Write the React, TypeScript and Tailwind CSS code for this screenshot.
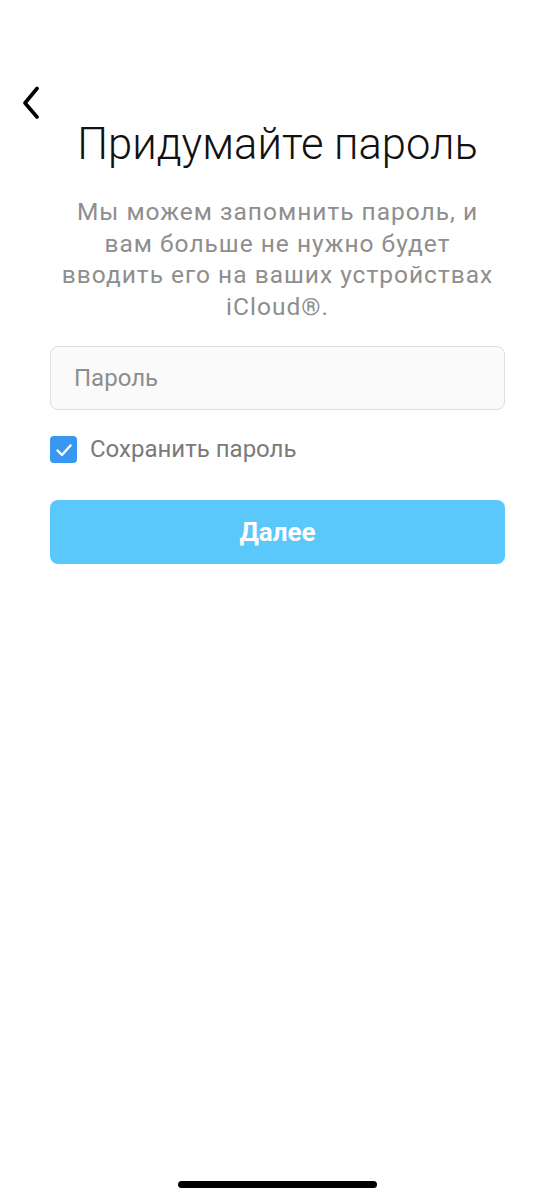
import { useState } from "react";

export default function App() {
  const [save, setSave] = useState(true);
  const [password, setPassword] = useState("");

  return (
    <div
      className="relative flex min-h-[1200px] w-full flex-col bg-white"
      style={{ fontFamily: "Roboto, 'Liberation Sans', sans-serif" }}
    >
      {/* Back */}
      <div className="pl-[20px] pt-[85px]">
        <button type="button" className="block h-[34px] text-black">
          <svg width="22" height="34" viewBox="0 0 22 34" fill="none">
            <path
              d="M17 3.5 L5 18 L17 32"
              stroke="currentColor"
              strokeWidth="3.6"
              strokeLinecap="round"
              strokeLinejoin="round"
            />
          </svg>
        </button>
      </div>

      <h1 className="text-center text-[43.5px] font-light leading-[52px] text-[#111]">
        Придумайте пароль
      </h1>

      <p className="mt-[25px] whitespace-nowrap text-center text-[24.5px] leading-[31.5px] tracking-[1px] text-[#8e8e8e]">
        Мы можем запомнить пароль, и
        <br />
        вам больше не нужно будет
        <br />
        вводить его на ваших устройствах
        <br />
        iCloud®.
      </p>

      <div className="mt-[24px] px-[50px]">
        <input
          type="password"
          value={password}
          onChange={(e) => setPassword(e.target.value)}
          placeholder="Пароль"
          className="h-[64px] w-full rounded-[8px] border border-[#dedede] bg-[#fafafa] px-[23px] text-[24px] text-[#262626] placeholder:text-[#8e8e8e] focus:outline-none"
        />

        <label className="mt-[26px] flex h-[27px] cursor-pointer items-center gap-[13px]">
          <span
            onClick={() => setSave(!save)}
            className={
              save
                ? "flex h-[27px] w-[27px] items-center justify-center rounded-[4px] bg-[#3897f0]"
                : "flex h-[27px] w-[27px] items-center justify-center rounded-[4px] border-2 border-[#c7c7c7] bg-white"
            }
          >
            {save && (
              <svg width="20" height="20" viewBox="0 0 20 20" fill="none">
                <path
                  d="M3.5 10.5 L8 15 L16.5 5.5"
                  stroke="white"
                  strokeWidth="2.4"
                  strokeLinecap="round"
                  strokeLinejoin="round"
                />
              </svg>
            )}
          </span>
          <span className="text-[24px] leading-[27px] text-[#7a7a7a]">Сохранить пароль</span>
        </label>

        <button
          type="button"
          className="mt-[37px] h-[64px] w-full rounded-[8px] bg-[#5bc8fb] text-[26px] font-bold text-white"
        >
          Далее
        </button>
      </div>

      {/* Home indicator */}
      <div className="mt-auto flex justify-center pb-[12px]">
        <div className="h-[7px] w-[199px] rounded-full bg-black" />
      </div>
    </div>
  );
}
